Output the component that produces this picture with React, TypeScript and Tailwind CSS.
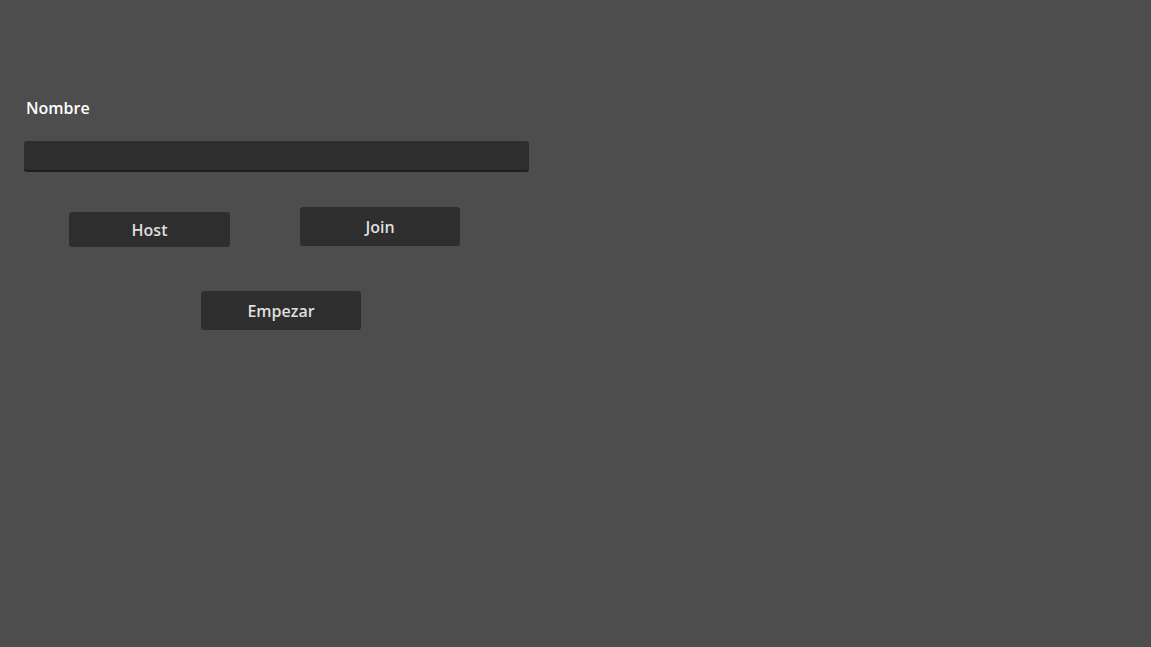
const font = { fontFamily: '"Open Sans", "Noto Sans", sans-serif' }

function Button({ label, className }: { label: string; className: string }) {
  return (
    <button
      className={`flex items-center justify-center rounded-[3px] bg-[#2e2e2e] text-[16px] font-semibold text-[#dfdfdf] ${className}`}
    >
      {label}
    </button>
  )
}

export default function App() {
  return (
    <div className="h-[647px] w-[1151px] overflow-hidden bg-[#4d4d4d]" style={font}>
      <div className="flex flex-col items-start pl-6 pt-[97px]">
        {/* Nombre */}
        <label className="ml-0.5 h-[23px] text-[16px] font-semibold leading-[23px] text-white">
          Nombre
        </label>
        <div className="mt-[21px] h-[31px] w-[505px] rounded-[3px] border-b-2 border-[#1f1f1f] bg-[#2e2e2e]" />

        {/* Host / Join */}
        <div className="mt-[35px] flex items-start">
          <Button label="Host" className="ml-[45px] mt-[5px] h-[35px] w-[161px]" />
          <Button label="Join" className="ml-[70px] h-[39px] w-[160px]" />
        </div>

        <Button label="Empezar" className="ml-[177px] mt-[44px] h-[39px] w-[160px]" />
      </div>
    </div>
  )
}
